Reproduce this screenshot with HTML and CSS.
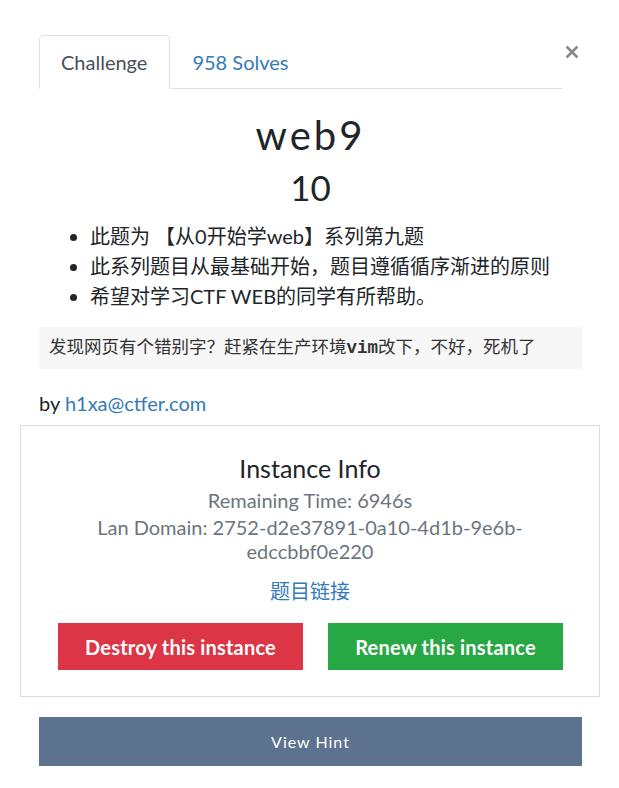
FILE: index.html
```html
<!DOCTYPE html>
<html>
<head>
<meta charset="utf-8">
<link rel="stylesheet" href="styles.css">
</head>
<body>
<div class="modal">
  <div class="header">
    <ul class="tabs">
      <li class="tab active">Challenge</li>
      <li class="tab"><a href="#">958 Solves</a></li>
    </ul>
    <button class="close" aria-label="Close">
      <svg width="14" height="14" viewBox="0 0 14 14"><path d="M1.5 1.5 L12.5 12.5 M12.5 1.5 L1.5 12.5" stroke="#8a8a8a" stroke-width="2.6" stroke-linecap="butt"/></svg>
    </button>
  </div>
  <h1 class="title">web9</h1>
  <h2 class="value">10</h2>
  <ul class="desc">
    <li>此题为 【从0开始学web】系列第九题</li>
    <li>此系列题目从最基础开始，题目遵循循序渐进的原则</li>
    <li>希望对学习CTF WEB的同学有所帮助。</li>
  </ul>
  <div class="code">发现网页有个错别字？赶紧在生产环境<b>vim</b>改下，不好，死机了</div>
  <p class="by">by <a href="#">h1xa@ctfer.com</a></p>
  <div class="instance">
    <h4 class="inst-title">Instance Info</h4>
    <p class="muted">Remaining Time: 6946s</p>
    <p class="muted domain">Lan Domain: 2752-d2e37891-0a10-4d1b-9e6b-edccbbf0e220</p>
    <p class="link"><a href="#">题目链接</a></p>
    <div class="actions">
      <div class="col"><button class="btn red">Destroy this instance</button></div>
      <div class="col"><button class="btn green">Renew this instance</button></div>
    </div>
  </div>
  <button class="hint">View Hint</button>
</div>
</body>
</html>
```
FILE: styles.css
```css
* { box-sizing: border-box; }
html, body { margin: 0; padding: 0; background: #fff; }
body {
  font-family: Lato, "Noto Sans CJK SC", sans-serif;
  color: #212529;
  font-size: 20px;
}
a { color: #337ab7; text-decoration: none; }
.modal {
  width: 543px;
  margin-left: 39px;
  padding-top: 35px;
}
.header {
  display: flex;
  align-items: flex-start;
}
.tabs {
  list-style: none;
  margin: 0;
  padding: 0;
  display: flex;
  width: 524px;
  border-bottom: 1px solid #dee2e6;
}
.tab {
  padding: 11px 22px 11px 21px;
  line-height: 30px;
  font-size: 20px;
  border: 1px solid transparent;
  border-radius: 5px 5px 0 0;
  margin-bottom: -1px;
}
.tab.active {
  border-color: #dee2e6 #dee2e6 #fff;
  color: #495057;
  background: #fff;
}
.close {
  border: 0;
  background: none;
  padding: 0;
  margin: 10px 0 0 2px;
  width: 14px;
  height: 14px;
  display: flex;
  margin-left: auto;
  margin-right: 3px;
}
.title {
  margin: 22px 0 0;
  text-align: center;
  font-weight: 400;
  font-size: 40px;
  letter-spacing: 3px;
  line-height: 48px;
}
.value {
  margin: 7px 0 0;
  text-align: center;
  font-weight: 400;
  font-size: 35px;
  line-height: 42px;
}
.desc {
  margin: 13px 0 0;
  padding-left: 51px;
  line-height: 30px;
}
.code {
  margin-top: 16px;
  background: #f7f7f7;
  height: 42px;
  line-height: 42px;
  padding-left: 10px;
  font-family: "Liberation Mono", "Noto Sans CJK SC", monospace;
  font-size: 17.5px;
  color: #333;
}
.code b { font-weight: 700; }
.by {
  margin: 21px 0 0;
  line-height: 26px;
}
.instance {
  margin: 9px -18px 0 -19px;
  border: 1px solid #dcdcdc;
  text-align: center;
  padding: 27px 20px 26px;
}
.inst-title {
  margin: 0;
  font-weight: 400;
  font-size: 25px;
  line-height: 30px;
}
.muted {
  margin: 5px 0 0;
  color: #6c757d;
  line-height: 24px;
}
.domain { margin-top: 3px; padding: 0 40px; }
.link { margin: 13px 0 0; line-height: 30px; }
.actions {
  display: flex;
  margin: 17px 1px 0 7px;
}
.col { flex: 1; display: flex; justify-content: center; }
.btn {
  border: 0;
  color: #fff;
  font-family: Lato, sans-serif;
  font-weight: 700;
  font-size: 20px;
  letter-spacing: 0.2px;
  height: 47px;
  padding: 0 27px;
}
.red { background: #dc3545; }
.green { background: #28a745; }
.hint {
  display: block;
  width: 100%;
  margin-top: 20px;
  height: 49px;
  border: 0;
  background: #5c728f;
  color: #fff;
  font-family: Lato, sans-serif;
  font-size: 16px;
  letter-spacing: 1px;
}
```
